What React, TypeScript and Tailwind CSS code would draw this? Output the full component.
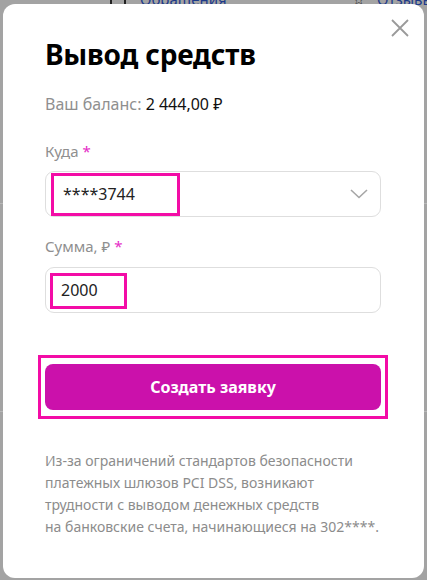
import React from "react";

const font = { fontFamily: '"Noto Sans", "Open Sans", Arial, sans-serif' };

export default function App() {
  return (
    <div className="relative w-[427px] h-[580px] overflow-hidden bg-[#a3a3a3]" style={font}>
      {/* dimmed background page fragments */}
      <div className="absolute left-[110px] top-[-12px] flex items-center gap-[14px] text-[15px] text-[#1a1a1a]">
        <span className="w-[16px] h-[16px] border-2 border-[#222]"></span>
        <span className="text-[#1d3a8a]">Обращения</span>
      </div>
      <div className="absolute left-[352px] top-[-12px] flex items-center gap-[12px] text-[15px]">
        <span className="text-[#222]">☆</span>
        <span className="text-[#1d3a8a]">Отзывы</span>
      </div>
      <div className="absolute left-0 top-[203px] w-[427px] h-px bg-[#b8b8b8]"></div>
      <div className="absolute left-0 top-[411px] w-[427px] h-px bg-[#b8b8b8]"></div>

      {/* modal */}
      <div className="absolute left-[3px] top-[4px] w-[421px] h-[574px] bg-white rounded-[12px] pl-[42px] pr-[43px] pt-[30px] flex flex-col">
        <button className="absolute right-[12px] top-[12px] w-[24px] h-[24px] flex items-center justify-center">
          <svg width="20" height="20" viewBox="0 0 20 20">
            <path d="M2 2 L18 18 M18 2 L2 18" stroke="#9a9a9a" strokeWidth="1.8" fill="none" />
          </svg>
        </button>

        <h1 className="text-[28px] leading-[40px] font-bold text-black tracking-[-0.2px]">Вывод средств</h1>

        <div className="mt-[19px] text-[16px] leading-[22px]">
          <span className="text-[#8f8f8f]">Ваш баланс: </span>
          <span className="text-[#111]">2 444,00 ₽</span>
        </div>

        <div className="mt-[25px] flex flex-col gap-[9px]">
          <div className="text-[15px] leading-[22px] text-[#8f8f8f]">
            Куда <span className="text-[#e52bc6]">*</span>
          </div>
          <div className="relative h-[46px] rounded-[9px] border border-[#dedede] flex items-center justify-between pl-[17px] pr-[12px]">
            <span className="text-[16px] text-[#222]">****3744</span>
            <svg width="18" height="10" viewBox="0 0 18 10">
              <path d="M1 1 L9 8.5 L17 1" stroke="#a6a6a6" strokeWidth="1.6" fill="none" />
            </svg>
            <div className="absolute left-[5px] top-[1px] w-[129px] h-[43px] border-[3px] border-[#f30ca6]"></div>
          </div>
        </div>

        <div className="mt-[18px] flex flex-col gap-[10px]">
          <div className="text-[15px] leading-[22px] text-[#8f8f8f]">
            Сумма, ₽ <span className="text-[#e52bc6]">*</span>
          </div>
          <div className="relative h-[46px] rounded-[9px] border border-[#dedede] flex items-center pl-[15px]">
            <span className="text-[16px] text-[#222]">2000</span>
            <div className="absolute left-[4px] top-[5px] w-[77px] h-[36px] border-[3px] border-[#f30ca6]"></div>
          </div>
        </div>

        <div className="mt-[42px] -mx-[7px] border-[3px] border-[#f30ca6] px-[4px] py-[6px]">
          <button className="w-full h-[46px] rounded-[8px] bg-[#cb11ab] text-white text-[16px] font-bold">
            Создать заявку
          </button>
        </div>

        <p className="mt-[31px] text-[14px] leading-[22px] text-[#8c8c8c] whitespace-nowrap">
          Из-за ограничений стандартов безопасности
          <br />
          платежных шлюзов PCI DSS, возникают
          <br />
          трудности с выводом денежных средств
          <br />
          на банковские счета, начинающиеся на 302****.
        </p>
      </div>
    </div>
  );
}
